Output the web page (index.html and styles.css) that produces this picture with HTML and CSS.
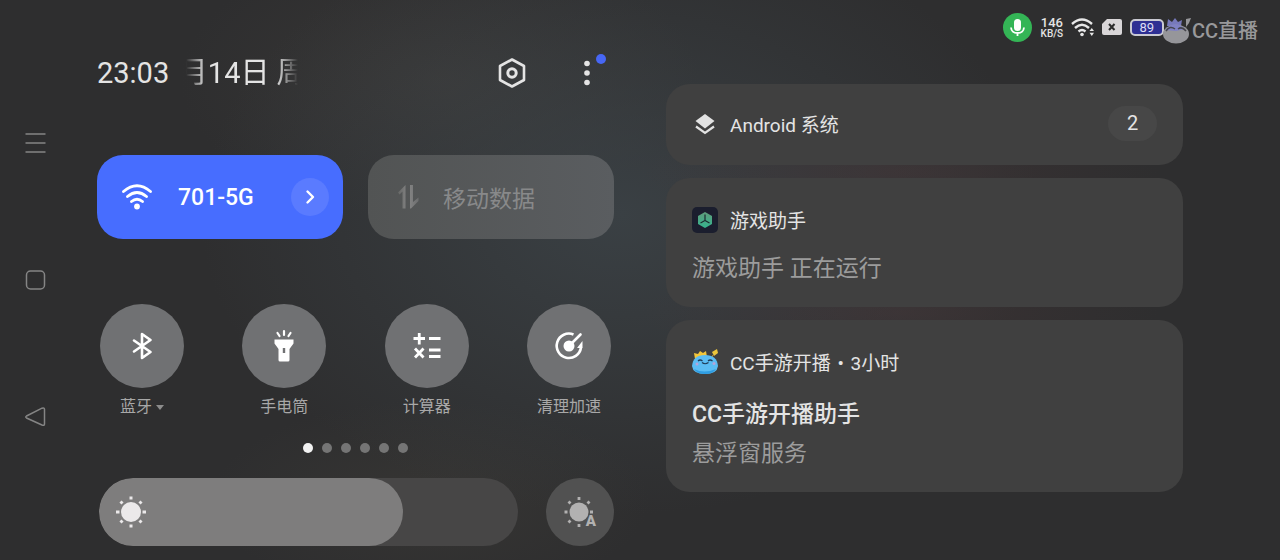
FILE: index.html
```html
<!DOCTYPE html>
<html lang="zh-CN">

<head>
    <meta charset="UTF-8">
    <meta name="viewport" content="width=device-width, initial-scale=1">
    <title>控制中心</title>
    <link rel="stylesheet" href="styles.css">
</head>

<body>
    <nav class="nav-keys">
        <button aria-label="最近任务">
            <svg width="22" height="22" viewBox="0 0 22 22"><path d="M1.500 2H21.500M1.500 11H21.500M1.500 20H21.500" /></svg>
        </button>
        <button aria-label="主屏幕">
            <svg width="22" height="22" viewBox="0 0 22 22"><rect x="2.500" y="2" width="18" height="18" rx="4" /></svg>
        </button>
        <button aria-label="返回">
            <svg width="22" height="22" viewBox="0 0 22 22"><path d="M2.500 10 L18 2.200 Q20.500 1.500 20.500 3.500 V18 Q20.500 20 18 19 L2.500 12 Q1 11 2.500 10Z" /></svg>
        </button>
    </nav>

    <div class="screen">
        <header class="status-bar">
            <span class="mic">
                <svg width="29" height="29" viewBox="0 0 29 29">
                    <rect x="11" y="6" width="7" height="12" rx="3.500" fill="#fff" />
                    <path d="M8 14.500 Q8.500 20 14.500 20 T21 14.500M14.500 20V23" fill="none" stroke="#fff" stroke-width="1.800" />
                </svg>
            </span>
            <span class="net-speed"><b>146</b><span>KB/S</span></span>
            <svg class="wifi-small" width="24" height="20" viewBox="0 0 24 20">
                <path d="M1 7 Q11 -2 21 7M4 11 Q11 4.500 18 11M7.500 14.500 Q11 11.500 14.500 14.500" fill="none" stroke="#e8e8e8" stroke-width="2.400" />
                <circle cx="11" cy="17.500" r="1.800" fill="#e8e8e8" />
                <path d="M18.500 14 L20.800 11 L23 14ZM18.500 15.800 L20.800 19 L23 15.800Z" fill="#e8e8e8" />
            </svg>
            <svg class="sim" width="20" height="16" viewBox="0 0 20 16">
                <path d="M5 0H18 Q20 0 20 2V14 Q20 16 18 16H2 Q0 16 0 14V5Z" fill="#d9d6d8" />
                <path d="M7 5L12.500 11M12.500 5L7 11" stroke="#2c2c2c" stroke-width="2" />
            </svg>
            <span class="battery">89</span>
            <span class="watermark">
                <svg width="30" height="28" viewBox="0 0 30 28">
                    <path d="M5 9 L6 2 L10 5 L13 1 L16 5 L20 3 L19 9Z" fill="#7779bb" />
                    <path d="M24 2 L29 1 L27 6 L24 10 Z" fill="#96969a" />
                    <ellipse cx="14" cy="17" rx="13" ry="9.500" fill="#96969a" />
                    <path d="M3 13 Q13 2 23 12 L14 14Z" fill="#7f81c4" />
                    <path d="M4 14 Q8 8 13 12M16 12 Q20 9 24 14" fill="none" stroke="#45454d" stroke-width="1.500" />
                </svg>
                <span>CC直播</span>
            </span>
        </header>

        <div class="shade">
            <main class="quick-panel">
                <div class="clock-row">
                    <time class="clock">23:03</time>
                    <div class="date"><span>月14日 周</span></div>
                    <button class="icon-btn" aria-label="设置">
                        <svg width="30" height="32" viewBox="0 0 30 32" fill="none" stroke="#e4e4e4">
                            <path d="M15 2.500 L27 9 V23 L15 29.500 L3 23 V9Z" stroke-width="2.600" stroke-linejoin="round" />
                            <circle cx="15" cy="16" r="4.200" stroke-width="3" />
                        </svg>
                    </button>
                    <button class="icon-btn more" aria-label="更多">
                        <svg width="8" height="26" viewBox="0 0 8 26" fill="#e4e4e4">
                            <circle cx="4" cy="3.500" r="2.800" />
                            <circle cx="4" cy="13" r="2.800" />
                            <circle cx="4" cy="22.500" r="2.800" />
                        </svg>
                    </button>
                </div>

                <div class="tiles">
                    <button class="tile tile-on">
                        <svg width="30" height="28" viewBox="0 0 30 28">
                            <path d="M1.500 8.500 Q15 -3 28.500 8.500M5.500 13.500 Q15 5.500 24.500 13.500M9.500 18.500 Q15 14 20.500 18.500" fill="none" stroke="#fff" stroke-width="2.800" stroke-linecap="round" />
                            <circle cx="15" cy="23.500" r="2.900" fill="#fff" />
                        </svg>
                        <span class="tile-name">701-5G</span>
                        <span class="tile-more">
                            <svg width="12" height="16" viewBox="0 0 12 16"><path d="M3.500 2.500 L9 8 L3.500 13.500" fill="none" stroke="#fff" stroke-width="2.400" stroke-linecap="round" stroke-linejoin="round" /></svg>
                        </span>
                    </button>
                    <button class="tile tile-off">
                        <svg width="30" height="28" viewBox="0 0 30 28">
                            <defs>
                                <linearGradient id="fade" x1="0" y1="0" x2="1" y2="0">
                                    <stop offset="0" stop-color="#666766" />
                                    <stop offset="0.500" stop-color="#868686" />
                                    <stop offset="1" stop-color="#6c6d6e" />
                                </linearGradient>
                            </defs>
                            <path d="M5 9.500 L12.500 2 V25.500 H9.500 V8.500 L6.500 11.500ZM17 2 H20 V19 L25.500 14.500 V18 L18 25.500 H17Z" fill="url(#fade)" />
                        </svg>
                        <span class="tile-name">移动数据</span>
                    </button>
                </div>

                <div class="toggles">
                    <button class="toggle">
                        <span class="disc">
                            <svg width="32" height="32" viewBox="0 0 32 32" fill="none" stroke="#fff" stroke-width="2.600" stroke-linejoin="round" stroke-linecap="round">
                                <path d="M8 10.500 L24.500 22 L16 28 V4 L24.500 10 L8 21.500" />
                            </svg>
                        </span>
                        <span class="toggle-name">蓝牙<i class="caret"></i></span>
                    </button>
                    <button class="toggle">
                        <span class="disc">
                            <svg width="32" height="36" viewBox="0 0 32 36">
                                <path d="M16 3V7M9.500 5L11.500 8M22.500 5L20.500 8" stroke="#fff" stroke-width="2.200" stroke-linecap="round" />
                                <path fill="#fff" fill-rule="evenodd" d="M6.500 11.500H25.500V15.500L21.500 21V32Q21.500 33.500 20 33.500H12Q10.500 33.500 10.500 32V21L6.500 15.500ZM14.800 20V25H17.200V20Z" />
                            </svg>
                        </span>
                        <span class="toggle-name">手电筒</span>
                    </button>
                    <button class="toggle">
                        <span class="disc">
                            <svg width="32" height="32" viewBox="0 0 32 32" fill="none" stroke="#fff" stroke-width="2.800">
                                <path d="M2.500 8.500H14M8.250 3V14.500M18 8.500H29.500M4 18.500L12.500 27.500M12.500 18.500L4 27.500M18 20H29.500M18 26.500H29.500" />
                            </svg>
                        </span>
                        <span class="toggle-name">计算器</span>
                    </button>
                    <button class="toggle">
                        <span class="disc">
                            <svg width="32" height="32" viewBox="0 0 32 32" fill="none" stroke="#fff" stroke-width="2.600">
                                <path d="M20.500 4.500 A12.200 12.200 0 1 0 28 17.500" />
                                <path d="M16 16L27.500 4.500" stroke-linecap="round" />
                                <circle cx="16" cy="16" r="5.500" fill="#fff" stroke="none" />
                                <path d="M24 18 L29.500 11 V18Z" fill="#fff" stroke="none" />
                            </svg>
                        </span>
                        <span class="toggle-name">清理加速</span>
                    </button>
                </div>

                <div class="pages">
                    <i class="current"></i><i></i><i></i><i></i><i></i><i></i>
                </div>

                <div class="brightness-row">
                    <div class="brightness">
                        <div class="level" style="width: 72.5%"></div>
                        <svg width="32" height="34" viewBox="0 0 32 34">
                            <circle cx="16" cy="17" r="10" fill="#ebe9ea" />
                            <path d="M16 1.500V4.500M16 29.500V32.500M1 17H4.500M27.500 17H31M5.500 6.500L7.500 8.500M24.500 25.500L26.500 27.500M26.500 6.500L24.500 8.500M7.500 25.500L5.500 27.500" stroke="#ebe9ea" stroke-width="3" />
                        </svg>
                        <input type="range" min="0" max="100" value="72" aria-label="亮度">
                    </div>
                    <button class="auto" aria-label="自动亮度">
                        <svg width="34" height="34" viewBox="0 0 34 34">
                            <circle cx="16" cy="17" r="9.500" fill="#b2b1b1" />
                            <path d="M16 2V5M16 29V32M1.500 17H4.500M27 17H30M5.500 6.500L7.500 8.500M26.500 6.500L24.500 8.500M7.500 25.500L5.500 27.500" stroke="#b2b1b1" stroke-width="2.800" />
                        </svg>
                        <span>A</span>
                    </button>
                </div>
            </main>

            <section class="notifications">
                <article class="card card-folded">
                    <div class="card-head">
                        <svg width="26" height="26" viewBox="0 0 26 26">
                            <path d="M13 3 L22.500 10 L13 17.500 L3.500 10Z" fill="#e2e2e2" />
                            <path d="M4 15.500 L13 22 L22 15.500" fill="none" stroke="#e2e2e2" stroke-width="2.200" />
                        </svg>
                        <h2>Android 系统</h2>
                        <span class="count">2</span>
                    </div>
                </article>

                <article class="card">
                    <div class="card-head">
                        <svg width="26" height="26" viewBox="0 0 26 26">
                            <defs>
                                <linearGradient id="cube" x1="0" y1="0" x2="0" y2="1">
                                    <stop offset="0" stop-color="#5f9c7c" />
                                    <stop offset="1" stop-color="#35b48e" />
                                </linearGradient>
                            </defs>
                            <rect width="26" height="26" rx="5" fill="#1b1e2e" />
                            <path d="M13 5 L20 9 V17 L13 21 L6 17 V9Z" fill="url(#cube)" />
                            <path d="M13 7.500V13.500L8.500 16M13 13.500L17.500 16" fill="none" stroke="#1b2a30" stroke-width="1.200" />
                        </svg>
                        <h2>游戏助手</h2>
                    </div>
                    <p class="card-text">游戏助手 正在运行</p>
                </article>

                <article class="card">
                    <div class="card-head">
                        <svg width="26" height="26" viewBox="0 0 26 26">
                            <path d="M3 10 L2 4 L6 5 L8 2 L11 4 L14 2 L15 8Z" fill="#f2c53a" />
                            <path d="M20 3 L25 0 L26 4 L22 7Z" fill="#ecc63c" />
                            <path d="M21 6L19 10" stroke="#c9a030" />
                            <path d="M0 17 Q1 6 13 6 Q25 6 26 17 Q25 25 13 25 Q1 25 0 17Z" fill="#5bbcf3" />
                            <path d="M2 20 Q12 25 24 20 Q21 25 13 25 Q5 25 2 20Z" fill="#2f9de2" />
                            <path d="M6 12 Q8 10 10.500 12M16 12 Q18 10 20.500 12M10 13.500 Q13 16 16.500 13.500" fill="none" stroke="#1f3c58" stroke-width="1.200" />
                            <circle cx="5" cy="15" r="1.500" fill="#b6a4d8" />
                            <circle cx="22" cy="14.500" r="1.500" fill="#b6a4d8" />
                        </svg>
                        <h2>CC手游开播 <span class="dot">•</span> 3小时</h2>
                    </div>
                    <h3 class="card-title">CC手游开播助手</h3>
                    <p class="card-text">悬浮窗服务</p>
                </article>
            </section>
        </div>
    </div>
</body>

</html>
```
FILE: styles.css
```css
* {
    box-sizing: border-box;
}

body,
h2,
h3,
p {
    margin: 0;
}

body {
    display: flex;
    min-height: 100vh;
    font-family: Roboto, "Noto Sans CJK SC", sans-serif;
    color: #e4e4e4;
    background:
        radial-gradient(ellipse 260px 50px at 900px 172px, rgba(80, 56, 58, 0.35), transparent),
        radial-gradient(ellipse 260px 50px at 900px 312px, rgba(80, 56, 58, 0.35), transparent),
        radial-gradient(ellipse 420px 300px at 620px 215px, rgba(66, 76, 82, 0.6), transparent),
        radial-gradient(ellipse 260px 140px at 440px 80px, rgba(70, 67, 64, 0.4), transparent),
        radial-gradient(ellipse 220px 100px at 430px 500px, rgba(70, 67, 60, 0.35), transparent),
        #2e2e2f;
}

button {
    padding: 0;
    border: none;
    background: none;
    color: inherit;
    font-family: inherit;
    cursor: pointer;
}

svg {
    display: block;
    flex: none;
}

/* system navigation keys */
.nav-keys {
    display: flex;
    flex-direction: column;
    justify-content: center;
    gap: 115px;
    width: 97px;
    padding-left: 24px;
    flex: none;
}

.nav-keys button {
    width: 22px;
    height: 22px;
}

.nav-keys svg {
    fill: none;
    stroke: #858585;
    stroke-width: 1.5;
}

.screen {
    flex: 1;
    min-width: 0;
}

/* status bar */
.status-bar {
    display: flex;
    justify-content: flex-end;
    align-items: center;
    height: 44px;
    padding: 10px 22px 0 0;
}

.mic {
    border-radius: 50%;
    background: #34b556;
}

.net-speed {
    display: flex;
    flex-direction: column;
    align-items: center;
    width: 24px;
    margin: 0 7px 0 8px;
    font-size: 10px;
    line-height: 10px;
    font-weight: 500;
}

.net-speed b {
    font-size: 13px;
    line-height: 13px;
    font-weight: 500;
}

.sim {
    margin: 0 8px 0 7px;
}

.battery {
    width: 34px;
    height: 17px;
    border: 2px solid #c9c9d2;
    border-radius: 5px;
    background: #2e2f93;
    color: #dcdcf4;
    font-size: 13px;
    line-height: 14px;
    text-align: center;
}

.watermark {
    display: flex;
    align-items: center;
    margin-left: -2px;
    padding-top: 8px;
    color: #98989a;
    font-size: 20px;
    line-height: 24px;
    font-weight: 500;
}

.shade {
    display: grid;
    grid-template-columns: 1fr 1fr;
    gap: 52px;
    padding-right: 97px;
}

/* quick settings */
.quick-panel {
    padding: 10px 0 14px;
}

.clock-row {
    display: flex;
    align-items: center;
    height: 38px;
    line-height: 40px;
    font-size: 29px;
}

.date {
    display: flex;
    justify-content: center;
    width: 112px;
    margin: 0 auto 0 17px;
    overflow: hidden;
    white-space: nowrap;
    -webkit-mask-image: linear-gradient(to right, transparent, #000 20px, #000 90px, transparent);
    mask-image: linear-gradient(to right, transparent, #000 20px, #000 90px, transparent);
}

.date span {
    flex: none;
}

.more {
    position: relative;
    margin: 0 23px 0 56px;
}

.more::after {
    content: "";
    position: absolute;
    top: -6px;
    right: -15px;
    width: 10px;
    height: 10px;
    border-radius: 50%;
    background: #4767f5;
}

.tiles {
    display: grid;
    grid-template-columns: 1fr 1fr;
    gap: 25px;
    margin-top: 63px;
}

.tile {
    display: flex;
    align-items: center;
    height: 84px;
    padding: 0 14px 0 25px;
    border-radius: 26px;
    font-size: 23px;
}

.tile-on {
    background: #476dff;
    color: #fff;
    font-weight: 500;
}

.tile-off {
    background: linear-gradient(to right, #525454, #5a5d60);
    color: #88898a;
}

.tile-name {
    margin: 0 auto 0 26px;
}

.tile-off .tile-name {
    margin-left: 20px;
}

.tile-more {
    display: flex;
    align-items: center;
    justify-content: center;
    width: 38px;
    height: 38px;
    border-radius: 50%;
    background: #5a7bff;
}

.toggles {
    display: flex;
    justify-content: space-between;
    margin-top: 65px;
    padding: 0 3px;
}

.toggle {
    display: flex;
    flex-direction: column;
    align-items: center;
    width: 84px;
}

.disc {
    display: flex;
    align-items: center;
    justify-content: center;
    width: 84px;
    height: 84px;
    border-radius: 50%;
    background: #707173;
}

.toggle-name {
    display: flex;
    align-items: center;
    margin-top: 7px;
    color: #a8a8a8;
    font-size: 16px;
    line-height: 24px;
    white-space: nowrap;
}

.caret {
    margin-left: 4px;
    border: 4px solid transparent;
    border-top: 5px solid #8c8c8c;
    border-bottom: none;
}

.pages {
    display: flex;
    justify-content: center;
    gap: 9px;
    margin-top: 24px;
}

.pages i {
    width: 10px;
    height: 10px;
    border-radius: 50%;
    background: #757575;
}

.pages .current {
    background: #f2f2f2;
}

.brightness-row {
    display: flex;
    gap: 28px;
    margin-top: 25px;
    padding-left: 2px;
}

.brightness {
    position: relative;
    display: flex;
    align-items: center;
    flex: 1;
    height: 68px;
    padding-left: 16px;
    border-radius: 34px;
    background: #474646;
    overflow: hidden;
}

.brightness svg {
    position: relative;
}

.level {
    position: absolute;
    inset: 0 auto 0 0;
    border-radius: 34px;
    background: #7e7d7d;
}

.brightness input {
    position: absolute;
    inset: 0;
    width: 100%;
    height: 100%;
    margin: 0;
    appearance: none;
    background: transparent;
    cursor: pointer;
}

.brightness input::-webkit-slider-thumb {
    appearance: none;
    width: 68px;
    height: 68px;
    background: transparent;
}

.auto {
    position: relative;
    display: flex;
    align-items: center;
    justify-content: center;
    width: 68px;
    height: 68px;
    border-radius: 50%;
    background: #515151;
}

.auto span {
    position: absolute;
    right: 18px;
    bottom: 17px;
    color: #b2b1b1;
    font-size: 15px;
    line-height: 15px;
    font-weight: 900;
}

/* notification cards */
.notifications {
    display: flex;
    flex-direction: column;
    gap: 13px;
    padding-top: 40px;
}

.card {
    padding: 24px 26px 20px;
    border-radius: 24px;
    background: #404040;
}

.card-folded {
    padding: 22px 26px 24px;
}

.card-head {
    display: flex;
    align-items: center;
    gap: 12px;
    height: 35px;
}

.card-head h2 {
    font-size: 19px;
    font-weight: 400;
}

.dot {
    margin: 0 2px;
}

.count {
    width: 49px;
    margin-left: auto;
    border-radius: 18px;
    background: #474747;
    font-size: 20px;
    line-height: 35px;
    text-align: center;
}

.card-title {
    margin-top: 18px;
    font-size: 23px;
    line-height: 36px;
    font-weight: 500;
}

.card-text {
    margin-top: 14px;
    color: #9c9c9c;
    font-size: 23px;
    line-height: 36px;
}

.card-title + .card-text {
    margin-top: 3px;
}
```
